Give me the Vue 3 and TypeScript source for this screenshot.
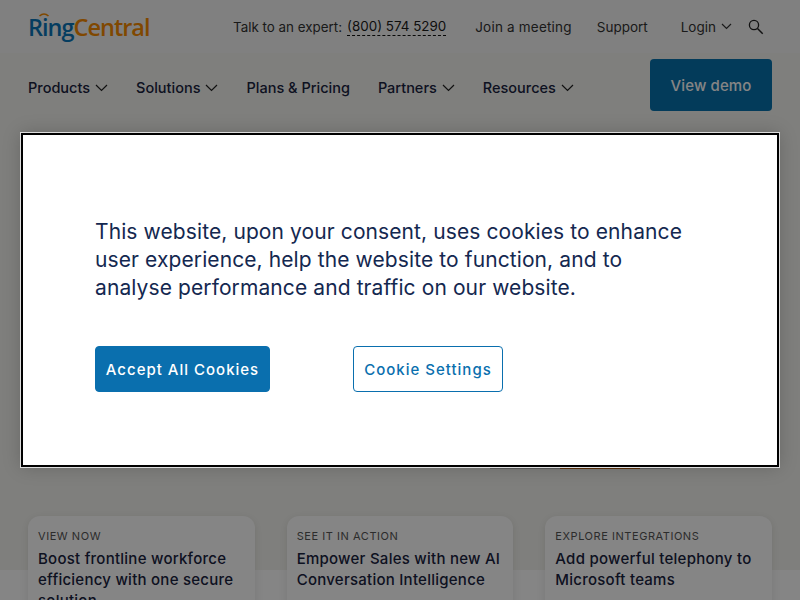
<template>
  <div class="page">
    <header class="topbar">
      <div class="logo">
        <svg class="logo-arcs" width="12" height="6" viewBox="0 0 12 6" aria-hidden="true">
          <path d="M1.5 4 Q6 0 10.5 4" fill="none" stroke="#f58a00" stroke-width="1.6" />
        </svg>
        <span class="logo-ring">Ring</span><span class="logo-central">Central</span>
      </div>
      <div class="top-links">
        <span class="expert">Talk to an expert:</span>
        <a class="phone">(800) 574 5290</a>
        <a class="join">Join a meeting</a>
        <a class="support">Support</a>
        <a class="login">
          Login
          <svg width="11" height="7" viewBox="0 0 11 7" aria-hidden="true">
            <path d="M1 1l4.5 4.5L10 1" fill="none" stroke="#333" stroke-width="1.2" />
          </svg>
        </a>
        <svg class="search" width="16" height="16" viewBox="0 0 16 16" aria-hidden="true">
          <circle cx="6" cy="6" r="4.6" fill="none" stroke="#222" stroke-width="1.3" />
          <path d="M9.5 9.5l5.2 5.2" stroke="#222" stroke-width="1.5" />
        </svg>
      </div>
    </header>

    <nav class="mainnav">
      <ul class="menu">
        <li v-for="item in menu" :key="item.label">
          {{ item.label }}
          <svg v-if="item.arrow" width="13" height="8" viewBox="0 0 13 8" aria-hidden="true">
            <path d="M1 1l5.5 5.5L12 1" fill="none" stroke="#222" stroke-width="1.2" />
          </svg>
        </li>
      </ul>
      <button class="demo" type="button">View demo</button>
    </nav>

    <section class="hero">
      <div class="hero-sliver"></div>
    </section>

    <section class="cards">
      <article v-for="card in cards" :key="card.tag" class="card">
        <p class="tag">{{ card.tag }}</p>
        <h3>{{ card.title }}</h3>
      </article>
    </section>

    <div class="overlay"></div>

    <div class="consent">
      <p>This website, upon your consent, uses cookies to enhance user experience, help the website to function, and to analyse performance and traffic on our website.</p>
      <div class="consent-actions">
        <button class="btn-accept" type="button">Accept All Cookies</button>
        <button class="btn-settings" type="button">Cookie Settings</button>
      </div>
    </div>
  </div>
</template>

<script setup lang="ts">
interface MenuItem {
  label: string;
  arrow: boolean;
}

interface Card {
  tag: string;
  title: string;
}

const menu: MenuItem[] = [
  { label: 'Products', arrow: true },
  { label: 'Solutions', arrow: true },
  { label: 'Plans & Pricing', arrow: false },
  { label: 'Partners', arrow: true },
  { label: 'Resources', arrow: true }
];

const cards: Card[] = [
  { tag: 'VIEW NOW', title: 'Boost frontline workforce efficiency with one secure solution' },
  { tag: 'SEE IT IN ACTION', title: 'Empower Sales with new AI Conversation Intelligence' },
  { tag: 'EXPLORE INTEGRATIONS', title: 'Add powerful telephony to Microsoft teams' }
];
</script>

<style>
html,
body {
  margin: 0;
  overflow: hidden;
}
</style>

<style scoped>
.page {
  position: relative;
  width: 800px;
  height: 600px;
  overflow: hidden;
  background: #fff;
  font-family: Inter, "Liberation Sans", sans-serif;
  color: #142850;
}

.topbar {
  display: flex;
  align-items: center;
  justify-content: space-between;
  box-sizing: border-box;
  height: 53px;
  padding: 0 36px 0 28px;
  background: #f6f6f6;
}

.logo {
  position: relative;
  font-family: "Open Sans", sans-serif;
  font-size: 23.5px;
  font-weight: 600;
  letter-spacing: -1px;
  line-height: 30px;
}

.logo-arcs {
  position: absolute;
  left: 10px;
  top: 0;
}

.logo-ring {
  color: #0a76b8;
}

.logo-central {
  color: #f58a00;
}

.top-links {
  display: flex;
  align-items: center;
  font-size: 13.5px;
  letter-spacing: 0.2px;
  color: #333;
}

.expert {
  font-size: 13.4px;
  letter-spacing: 0;
}

.phone {
  margin-left: 5px;
  font-size: 13.4px;
  letter-spacing: 0;
  color: #1a1a1a;
  border-bottom: 1px dashed #111;
  line-height: 17px;
}

.join {
  margin-left: 29px;
}

.support {
  margin-left: 25px;
  letter-spacing: 0;
}

.login {
  display: flex;
  align-items: center;
  gap: 5px;
  margin-left: 33px;
  letter-spacing: 0;
}

.search {
  margin-left: 16px;
}

.mainnav {
  display: flex;
  align-items: flex-start;
  justify-content: space-between;
  box-sizing: border-box;
  height: 70px;
  padding: 6px 28px 0;
  background: #f4f4f0;
}

.menu {
  display: flex;
  gap: 28px;
  margin: 0;
  padding: 19px 0 0;
  list-style: none;
  font-size: 14.5px;
  font-weight: 500;
  line-height: 20px;
  color: #1a2340;
}

.menu li {
  display: flex;
  align-items: center;
  gap: 5px;
}

.demo {
  width: 122px;
  height: 52px;
  border: none;
  border-radius: 4px;
  background: #0672ad;
  color: #fff;
  font: 500 15px Inter, "Liberation Sans", sans-serif;
  letter-spacing: 0.1px;
}

.hero {
  display: flex;
  align-items: flex-start;
  justify-content: center;
  box-sizing: border-box;
  height: 393px;
  padding: 344px 0 0 360px;
  background: #f4f4f0;
}

.hero-sliver {
  width: 180px;
  height: 2px;
  background: linear-gradient(90deg, #bbb 70px, #b0601a 70px, #b0601a 150px, #bbb 150px);
}

.cards {
  display: flex;
  gap: 32px;
  height: 84px;
  padding: 0 28px;
  background: linear-gradient(#f4f4f0 54px, #fff 54px);
}

.card {
  box-sizing: border-box;
  flex: 1;
  height: 120px;
  padding: 13px 10px;
  border-radius: 12px;
  background: #fff;
  box-shadow: 0 2px 10px rgba(0, 0, 0, 0.1);
}

.tag {
  margin: 0 0 5px;
  font-size: 11px;
  line-height: 14px;
  letter-spacing: 0.55px;
  color: #555;
}

.card h3 {
  margin: 0;
  font-size: 15px;
  font-weight: 500;
  line-height: 21px;
  letter-spacing: 0.25px;
  color: #1a2340;
}

.overlay {
  position: absolute;
  inset: 0;
  background: rgba(0, 0, 0, 0.48);
}

.consent {
  position: absolute;
  left: 21px;
  top: 133px;
  box-sizing: border-box;
  width: 758px;
  height: 334px;
  padding: 83px 72px 0;
  border: 2px solid #000;
  outline: 1px solid #ddd;
  background: #fff;
  box-shadow: 0 0 18px rgba(0, 0, 0, 0.2);
}

.consent p {
  margin: 0;
  max-width: 590px;
  font-size: 21px;
  line-height: 28px;
  letter-spacing: 0.1px;
  color: #142850;
}

.consent-actions {
  display: flex;
  gap: 83px;
  margin-top: 44px;
}

.consent-actions button {
  box-sizing: border-box;
  height: 46px;
  border-radius: 4px;
  font: 500 15px Inter, "Liberation Sans", sans-serif;
  letter-spacing: 1px;
}

.btn-accept {
  width: 175px;
  border: 1px solid #0a6fae;
  background: #0a6fae;
  color: #fff;
}

.btn-settings {
  width: 150px;
  border: 1px solid #0a6fae;
  background: #fff;
  color: #0a6fae;
}
</style>
